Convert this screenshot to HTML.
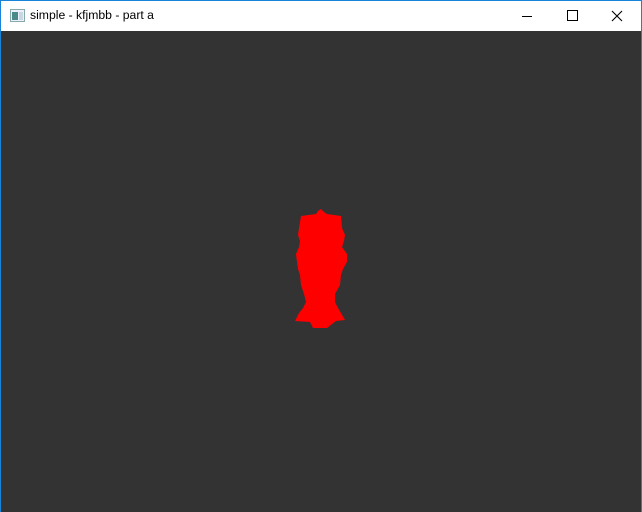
<!DOCTYPE html>
<html><head><style>
html,body{margin:0;padding:0;width:642px;height:511px;overflow:hidden;background:#333}
.win{position:absolute;left:0;top:0;width:640px;height:511px;border:1px solid #1883d7;border-bottom:none;background:#333}
.tb{position:absolute;left:0;top:0;width:640px;height:30px;background:#fff}
.t{position:absolute;left:29px;top:7px;font:12.2px "Liberation Sans",sans-serif;color:#000}
</style></head><body>
<div class="win">
<div class="tb">
<svg width="640" height="30" style="position:absolute;left:0;top:0">
<rect x="9.5" y="8.5" width="14" height="12" fill="#eef" stroke="#8aa" />
<rect x="11" y="11" width="6" height="8" fill="#4a8a8a"/>
<rect x="18" y="11" width="4" height="8" fill="#c8d8e0"/>
<line x1="521" y1="15.5" x2="531" y2="15.5" stroke="#000"/>
<rect x="566.5" y="9.5" width="10" height="10" fill="none" stroke="#000"/>
<path d="M611 10 L621 20 M621 10 L611 20" stroke="#000" stroke-width="1.1"/>
</svg>
<div class="t">simple - kfjmbb - part a</div>
</div>
</div>
<svg width="642" height="511" style="position:absolute;left:0;top:0">
<path fill="#f00" d="M301 216 L316 214 L318 211 L321 209 L324 212 L327 214 L341 216 L342 228 L345 235 L344 241 L342 247 L347 254 L347 262 L343 269 L341 275 L340 285 L335 294 L335 302 L338 308 L341 313 L345 320 L336 321 L327 328 L313 328 L310 322 L295 321 L299 313 L303 308 L306 302 L304 294 L301 285 L300 275 L298 269 L297 262 L296 254 L299 247 L300 241 L298 235 L299 228 Z"/>
</svg>
</body></html>
